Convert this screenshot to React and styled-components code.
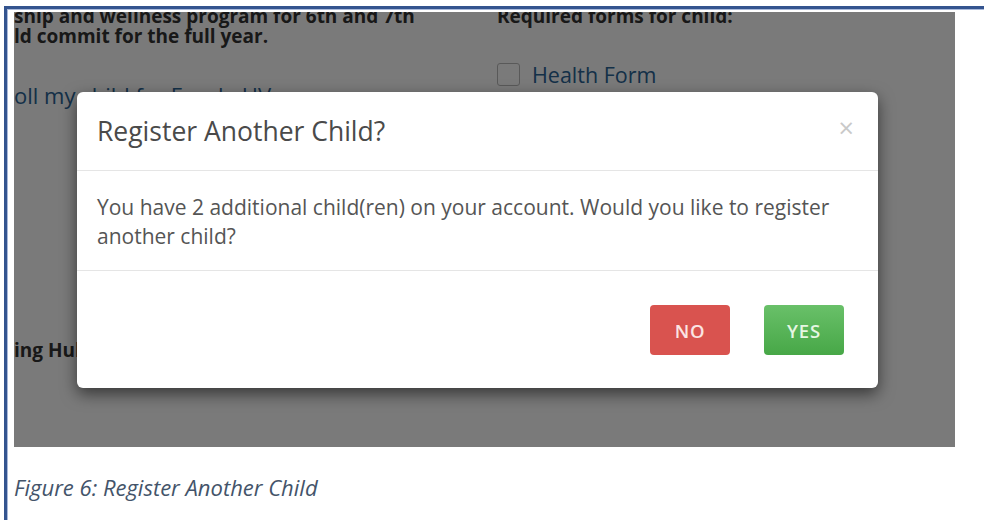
import React from "react";
import styled, { createGlobalStyle } from "styled-components";

const Global = createGlobalStyle`
  html, body { margin: 0; padding: 0; background: #ffffff; }
  body { width: 984px; height: 520px; overflow: hidden; font-family: "Open Sans", "Liberation Sans", sans-serif; }
`;

const Frame = styled.div`
  margin: 6px 0 0 4px;
  height: 514px;
  border-top: 3px solid #34548f;
  border-left: 3px solid #34548f;
  box-shadow: inset 1px 1px 0 #a9b9da;
  padding: 3px 0 0 7px;
  box-sizing: border-box;
`;

const Shot = styled.div`
  position: relative;
  width: 941px;
  height: 435px;
  overflow: hidden;
  background: #ffffff;
`;

const Page = styled.div`
  display: grid;
  grid-template-columns: 483px 1fr;
  height: 100%;
  color: #333;
`;

const Column = styled.div`
  display: flex;
  flex-direction: column;
`;

const Bold = styled.div`
  font-weight: 700;
  font-size: 19px;
  line-height: 20px;
  color: #333;
  white-space: nowrap;
  margin-top: ${(p) => p.$top || 0}px;
`;

const Link = styled.div`
  font-size: 22px;
  line-height: 26px;
  color: #2a6496;
  margin-top: ${(p) => p.$top || 0}px;
  white-space: nowrap;
`;

const CheckRow = styled.label`
  display: flex;
  align-items: center;
  gap: 12px;
  margin-top: ${(p) => p.$top || 0}px;
  font-size: 21.5px;
  color: #2a6496;
`;

const Box = styled.span`
  width: 21px;
  height: 21px;
  border: 1px solid #bbb;
  border-radius: 3px;
  background: #fff;
`;

const Backdrop = styled.div`
  position: absolute;
  inset: 0;
  background: rgba(0, 0, 0, 0.52);
  padding: 80px 0 0 63px;
`;

const Modal = styled.div`
  width: 801px;
  background: #fff;
  border-radius: 6px;
  box-shadow: 0 6px 16px rgba(0, 0, 0, 0.55);
  display: flex;
  flex-direction: column;
`;

const Header = styled.div`
  display: flex;
  align-items: center;
  justify-content: space-between;
  height: 78px;
  padding: 0 24px 0 20px;
  border-bottom: 1px solid #e5e5e5;
`;

const Title = styled.h4`
  margin: 0;
  font-weight: 400;
  font-size: 26.5px;
  color: #4a4a4a;
`;

const Close = styled.span`
  font-size: 27px;
  font-weight: 400;
  color: #c9c9c9;
  line-height: 1;
  margin-top: -8px;
`;

const Body = styled.div`
  padding: 22px 20px 19px;
  font-size: 21px;
  line-height: 29px;
  color: #555;
  border-bottom: 1px solid #e5e5e5;
`;

const Footer = styled.div`
  display: flex;
  justify-content: flex-end;
  gap: 34px;
  padding: 34px 34px 33px;
`;

const Button = styled.button`
  width: 80px;
  height: 50px;
  border: 0;
  border-radius: 4px;
  font-family: inherit;
  font-size: 18.5px;
  font-weight: 600;
  letter-spacing: 0.8px;
  color: ${(p) => (p.$variant === "yes" ? "#e6f6e3" : "#fbe4e3")};
  background: ${(p) =>
    p.$variant === "yes"
      ? "linear-gradient(#69c069, #47a747)"
      : "#d9534f"};
`;

const Caption = styled.p`
  margin: 25px 0 0;
  font-style: italic;
  font-size: 22px;
  color: #44546a;
`;

export default function App() {
  return (
    <>
      <Global />
      <Frame>
        <Shot>
          <Page>
            <Column>
              <Bold $top={-6}>ship and wellness program for 6th and 7th</Bold>
              <Bold>ld commit for the full year.</Bold>
              <Link $top={36}>oll my child for EurekaHV</Link>
              <Bold $top={232}>ing Hub</Bold>
            </Column>
            <Column>
              <Bold $top={-6}>Required forms for child:</Bold>
              <CheckRow $top={34}>
                <Box />
                Health Form
              </CheckRow>
            </Column>
          </Page>
          <Backdrop>
            <Modal>
              <Header>
                <Title>Register Another Child?</Title>
                <Close>×</Close>
              </Header>
              <Body>
                You have 2 additional child(ren) on your account. Would you like to register
                another child?
              </Body>
              <Footer>
                <Button $variant="no">NO</Button>
                <Button $variant="yes">YES</Button>
              </Footer>
            </Modal>
          </Backdrop>
        </Shot>
        <Caption>Figure 6: Register Another Child</Caption>
      </Frame>
    </>
  );
}
